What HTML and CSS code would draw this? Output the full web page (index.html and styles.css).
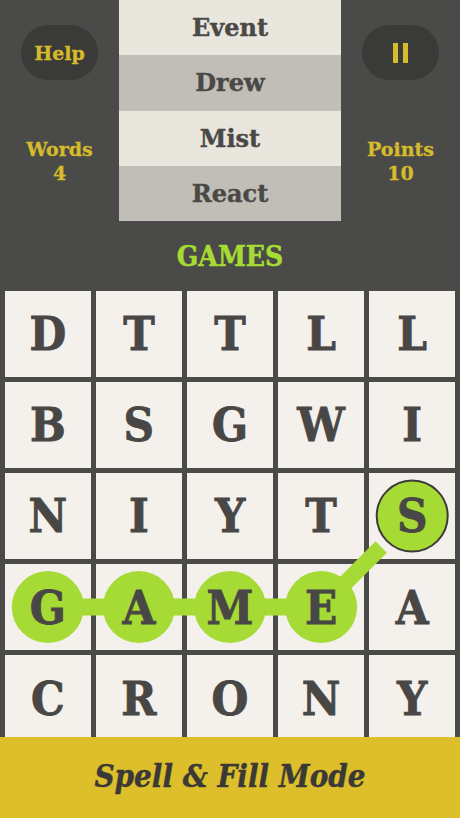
FILE: index.html
```html
<!DOCTYPE html>
<html lang="en">
<head>
<meta charset="utf-8">
<title>Spell &amp; Fill Mode</title>
<link rel="stylesheet" href="styles.css">
</head>
<body>
<div class="app">
  <div class="top">
    <div class="header">
      <div class="side">
        <button class="pill help">Help</button>
        <div class="stat"><span>Words</span><span>4</span></div>
      </div>
      <ul class="words">
        <li class="light">Event</li>
        <li class="dark">Drew</li>
        <li class="light">Mist</li>
        <li class="dark">React</li>
      </ul>
      <div class="side">
        <button class="pill pause" aria-label="Pause"><span class="bar"></span><span class="bar"></span></button>
        <div class="stat"><span>Points</span><span>10</span></div>
      </div>
    </div>
    <div class="current">GAMES</div>
  </div>
  <div class="board">
    <svg class="path" viewBox="0 0 460 446" width="460" height="446" aria-hidden="true">
      <line x1="47.8" y1="316.1" x2="321.1" y2="316.1" stroke="#a6da34" stroke-width="17"/>
      <line x1="321.1" y1="316.1" x2="381.2" y2="256" stroke="#a6da34" stroke-width="16"/>
      <circle cx="47.8" cy="316.1" r="36" fill="#a6da34"/>
      <circle cx="138.9" cy="316.1" r="36" fill="#a6da34"/>
      <circle cx="230" cy="316.1" r="36" fill="#a6da34"/>
      <circle cx="321.1" cy="316.1" r="36" fill="#a6da34"/>
      <circle cx="412.2" cy="225" r="35.5" fill="#a6da34" stroke="#3c3b39" stroke-width="2"/>
    </svg>
    <div class="cell"><span>D</span></div>
    <div class="cell"><span>T</span></div>
    <div class="cell"><span>T</span></div>
    <div class="cell"><span>L</span></div>
    <div class="cell"><span>L</span></div>
    <div class="cell"><span>B</span></div>
    <div class="cell"><span>S</span></div>
    <div class="cell"><span>G</span></div>
    <div class="cell"><span>W</span></div>
    <div class="cell"><span>I</span></div>
    <div class="cell"><span>N</span></div>
    <div class="cell"><span>I</span></div>
    <div class="cell"><span>Y</span></div>
    <div class="cell"><span>T</span></div>
    <div class="cell"><span>S</span></div>
    <div class="cell"><span>G</span></div>
    <div class="cell"><span>A</span></div>
    <div class="cell"><span>M</span></div>
    <div class="cell"><span>E</span></div>
    <div class="cell"><span>A</span></div>
    <div class="cell"><span>C</span></div>
    <div class="cell"><span>R</span></div>
    <div class="cell"><span>O</span></div>
    <div class="cell"><span>N</span></div>
    <div class="cell"><span>Y</span></div>
  </div>
  <div class="banner">Spell &amp; Fill Mode</div>
</div>
</body>
</html>
```

FILE: styles.css
```css
* { box-sizing: border-box; }
html, body {
  margin: 0;
  padding: 0;
  background: #4a4a48;
}
body {
  width: 460px;
  height: 818px;
  overflow: hidden;
  font-family: "DejaVu Serif Condensed", "DejaVu Serif", serif;
  font-weight: bold;
}
.app {
  display: flex;
  flex-direction: column;
  height: 818px;
}
.top {
  height: 291px;
  display: flex;
  flex-direction: column;
}
.header {
  display: flex;
  height: 221px;
}
.side {
  width: 119px;
  display: flex;
  flex-direction: column;
  align-items: center;
  padding-top: 25px;
}
.pill {
  width: 77px;
  height: 55px;
  border: none;
  border-radius: 28px;
  background: #3a3a39;
  color: #d6bb2b;
  font-family: "DejaVu Serif", serif;
  font-weight: bold;
  font-size: 19px;
  padding: 0;
  display: flex;
  align-items: center;
  justify-content: center;
  -webkit-text-stroke: 0.3px #d6bb2b;
}
.pause { gap: 5px; }
.pause .bar {
  width: 5px;
  height: 20px;
  background: #d6bb2b;
}
.stat {
  margin-top: 57px;
  display: flex;
  flex-direction: column;
  align-items: center;
  color: #d6bb2b;
  font-family: "DejaVu Serif", serif;
  font-size: 19px;
  line-height: 24px;
  -webkit-text-stroke: 0.3px #d6bb2b;
}
.words {
  list-style: none;
  margin: 0;
  padding: 0;
  width: 222px;
  display: flex;
  flex-direction: column;
}
.words li {
  height: 55.25px;
  display: flex;
  align-items: center;
  justify-content: center;
  font-family: "DejaVu Serif", serif;
  font-size: 24px;
  color: #4a4947;
  -webkit-text-stroke: 0.4px #4a4947;
}
.words .light { background: #e9e6de; }
.words .dark { background: #c1beb7; }
.current {
  flex: 1;
  display: flex;
  align-items: center;
  justify-content: center;
  color: #a6da34;
  font-size: 28px;
  -webkit-text-stroke: 0.5px #a6da34;
}
.board {
  position: relative;
  height: 446px;
  overflow: hidden;
  padding: 0 5px;
  display: grid;
  grid-template-columns: repeat(5, 1fr);
  grid-template-rows: repeat(5, 85.6px);
  gap: 5.5px;
}
.path {
  position: absolute;
  left: 0;
  top: 0;
  z-index: 1;
}
.cell {
  background: #f4f0eb;
  display: flex;
  align-items: center;
  justify-content: center;
  font-size: 47px;
  color: #484745;
}
.cell span {
  position: relative;
  z-index: 2;
  -webkit-text-stroke: 0.8px #484745;
}
.banner {
  height: 81px;
  background: #dcbf2b;
  display: flex;
  align-items: center;
  justify-content: center;
  color: #3b3936;
  font-family: "DejaVu Serif Condensed", "DejaVu Serif", serif;
  font-style: italic;
  font-weight: bold;
  font-size: 31px;
  padding-bottom: 3px;
  -webkit-text-stroke: 0.4px #3b3936;
}
```
